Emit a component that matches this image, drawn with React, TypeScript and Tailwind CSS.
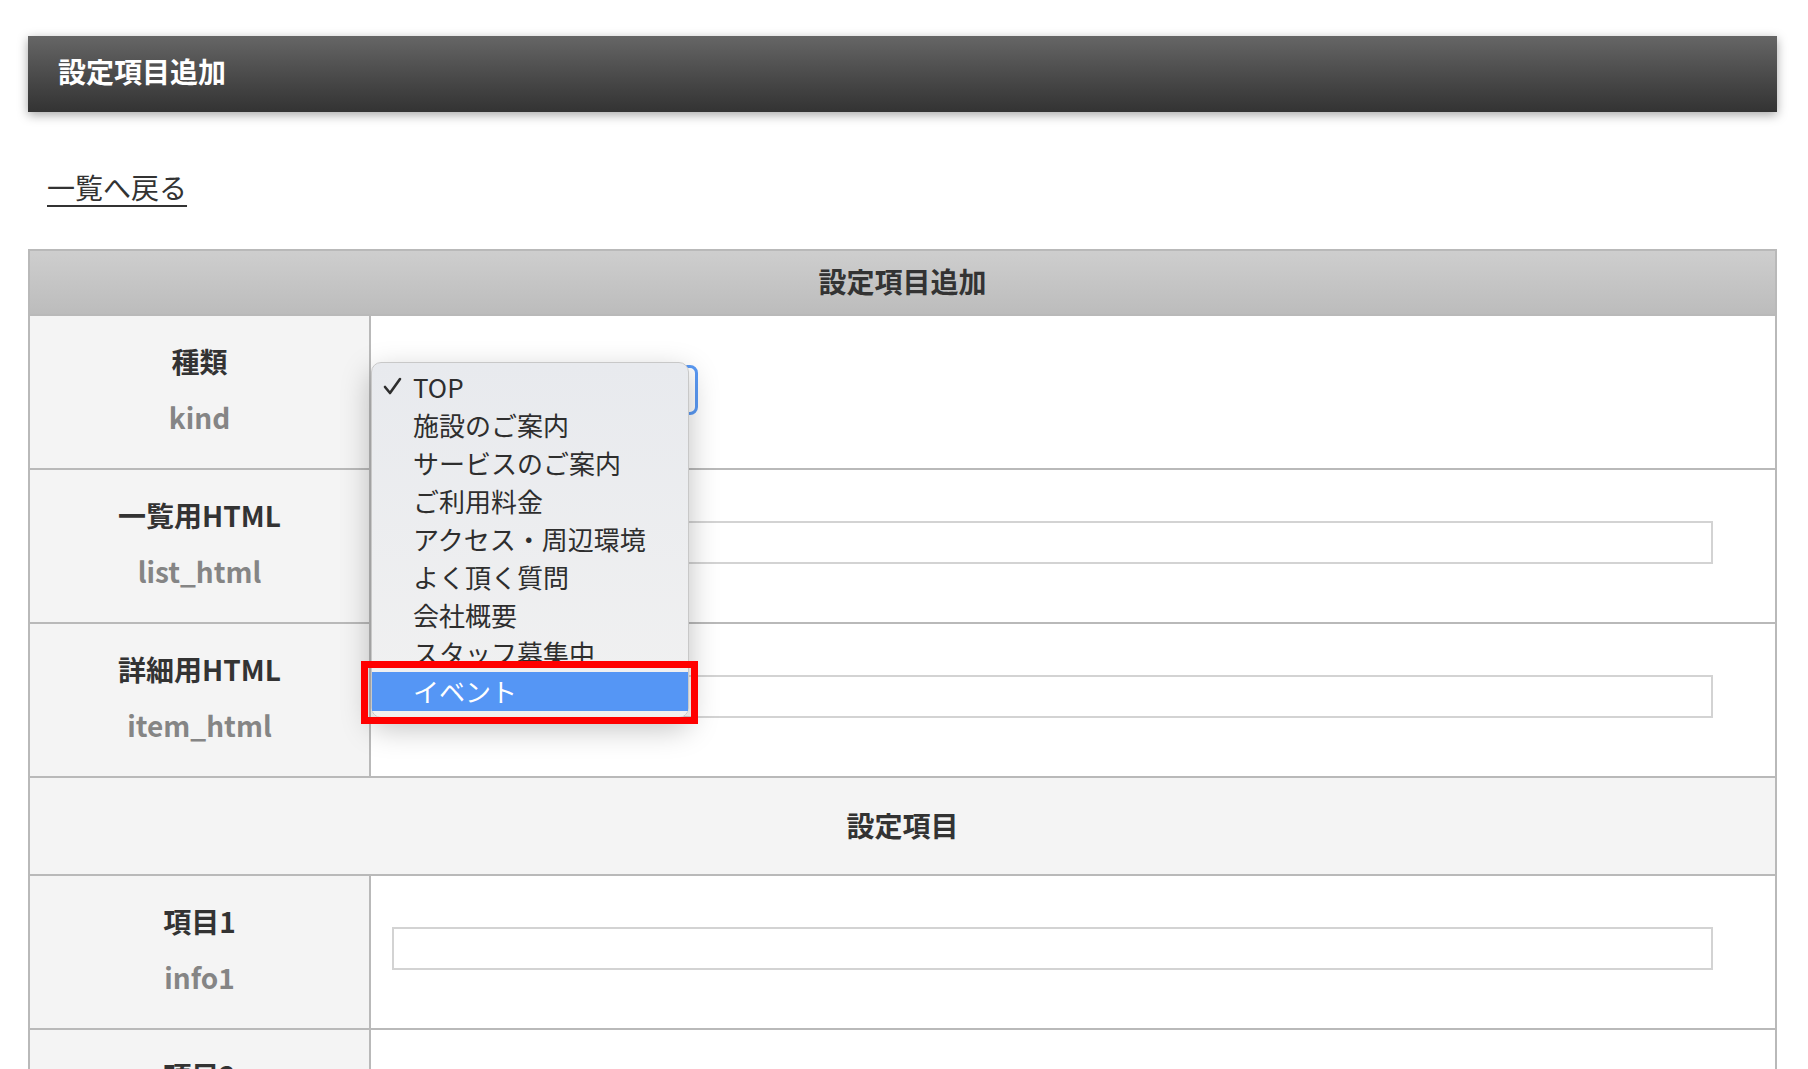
import React from "react";

const font = { fontFamily: '"Noto Sans CJK JP", "Noto Sans", sans-serif' };

const options = [
  "TOP",
  "施設のご案内",
  "サービスのご案内",
  "ご利用料金",
  "アクセス・周辺環境",
  "よく頂く質問",
  "会社概要",
  "スタッフ募集中",
];

function FieldRow({
  label,
  sub,
  hasInput = true,
}: {
  label: string;
  sub: string;
  hasInput?: boolean;
}) {
  return (
    <div className="grid h-[154px] grid-cols-[341px_1fr] border-b-2 border-[#b9b9b9]">
      <div className="flex flex-col items-center justify-center gap-[16px] border-r-2 border-[#b9b9b9] bg-[#f4f4f4] pb-[6px]">
        <span className="text-[28px] leading-[40px] font-bold text-[#333]">{label}</span>
        <span className="text-[28px] leading-[40px] font-bold text-[#858585]">{sub}</span>
      </div>
      <div className="flex items-center bg-white pb-[8px] pl-[21px] pr-[62px]">
        {hasInput && (
          <div className="h-[43px] w-full border-2 border-[#d3d3d3] bg-white" />
        )}
      </div>
    </div>
  );
}

export default function App() {
  return (
    <div className="relative h-[1069px] overflow-hidden bg-white" style={font}>
      <div className="pt-[36px]">
        <div className="ml-[28px] flex h-[76px] w-[1749px] items-center bg-gradient-to-b from-[#666666] to-[#333333] pb-[6px] pl-[30px] shadow-[0_3px_10px_rgba(0,0,0,0.35)]">
          <h1 className="text-[28px] font-bold text-white">設定項目追加</h1>
        </div>

        <div className="mt-[55px] ml-[47px] h-[40px]">
          <a className="text-[28px] leading-[40px] text-[#333] underline underline-offset-[6px]">
            一覧へ戻る
          </a>
        </div>

        <div className="mt-[42px] ml-[28px] w-[1749px] border-2 border-[#b9b9b9]">
          <div className="flex h-[65px] items-center justify-center border-b-2 border-[#b9b9b9] bg-gradient-to-b from-[#cecece] to-[#bcbcbc] pb-[4px]">
            <span className="text-[28px] font-bold text-[#333]">設定項目追加</span>
          </div>
          <FieldRow label="種類" sub="kind" hasInput={false} />
          <FieldRow label="一覧用HTML" sub="list_html" />
          <FieldRow label="詳細用HTML" sub="item_html" />
          <div className="flex h-[98px] items-center justify-center border-b-2 border-[#b9b9b9] bg-[#f4f4f4] pb-[2px]">
            <span className="text-[28px] font-bold text-[#333]">設定項目</span>
          </div>
          <FieldRow label="項目1" sub="info1" />
          <FieldRow label="項目2" sub="info2" />
          <FieldRow label="項目3" sub="info3" />
        </div>
      </div>

      {/* focused select behind the popup */}
      <div className="absolute left-[382px] top-[365px] h-[50px] w-[316px] rounded-[8px] border-[3px] border-[#5a9af5] bg-white" />

      {/* native select popup */}
      <div className="absolute left-[371px] top-[362px] h-[356px] w-[318px] rounded-[10px] border border-[#c8c8c8] bg-gradient-to-b from-[#e8eaee] to-[#f1f1f1] pt-[4px] shadow-[0_10px_30px_rgba(0,0,0,0.25)]">
        {options.map((o, i) => (
          <div key={o} className="relative flex h-[38px] items-center pl-[41px] text-[26px] text-[#2e2e2e]">
            {i === 0 && (
              <svg className="absolute left-[11px] top-[10px]" width="19" height="19" viewBox="0 0 19 19">
                <polyline points="2,10 7,16 17,2" fill="none" stroke="#2e2e2e" strokeWidth="2.6" strokeLinecap="round" strokeLinejoin="round" />
              </svg>
            )}
            {o}
          </div>
        ))}
        <div className="mt-[1px] flex h-[39px] items-center bg-[#5596f5] pb-[2px] pl-[41px] text-[26px] text-white">
          イベント
        </div>
      </div>

      {/* red highlight box */}
      <div className="absolute left-[361px] top-[661px] h-[63px] w-[337px] border-[7px] border-[#ff0000]" />
    </div>
  );
}
